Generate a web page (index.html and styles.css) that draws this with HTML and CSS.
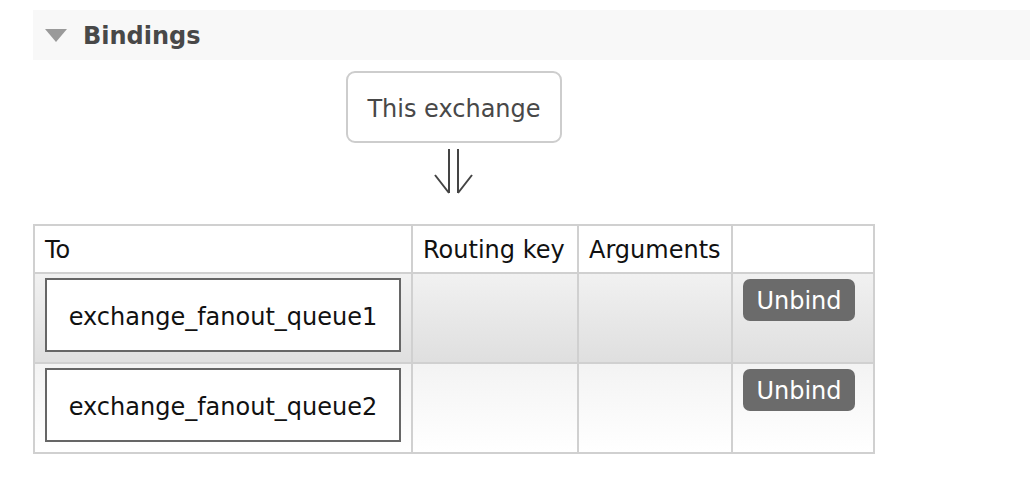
FILE: index.html
```html
<!DOCTYPE html>
<html>
<head>
<meta charset="utf-8">
<link rel="stylesheet" href="styles.css">
</head>
<body>
<div class="page">
  <div class="section-head">
    <span class="toggle"></span>
    <h2 class="section-title">Bindings</h2>
  </div>
  <div class="bindings">
    <div class="source">
      <div class="exchange-box">This exchange</div>
      <svg class="arrow" width="40" height="48" viewBox="0 0 40 48">
        <path d="M15 1 V45 M24 1 V45 M1 27 L15 45 M38 27 L24 45" fill="none" stroke="#444" stroke-width="2"/>
      </svg>
    </div>
    <table class="list">
      <colgroup>
        <col class="c-to"><col class="c-key"><col class="c-args"><col class="c-act">
      </colgroup>
      <thead>
        <tr><th>To</th><th>Routing key</th><th>Arguments</th><th></th></tr>
      </thead>
      <tbody>
        <tr class="alt1">
          <td><div class="queue-box">exchange_fanout_queue1</div></td>
          <td></td>
          <td></td>
          <td><button class="btn">Unbind</button></td>
        </tr>
        <tr class="alt2">
          <td><div class="queue-box">exchange_fanout_queue2</div></td>
          <td></td>
          <td></td>
          <td><button class="btn">Unbind</button></td>
        </tr>
      </tbody>
    </table>
  </div>
</div>
</body>
</html>
```
FILE: styles.css
```css
html, body {
  margin: 0;
  padding: 0;
  background: #fff;
}
body {
  font-family: "DejaVu Sans", Verdana, sans-serif;
  color: #484848;
}
.page {
  padding: 10px 0 0 33px;
}
.section-head {
  display: flex;
  align-items: center;
  height: 50px;
  background: #f8f8f8;
  padding-left: 12px;
}
.toggle {
  width: 0;
  height: 0;
  border-left: 11px solid transparent;
  border-right: 11px solid transparent;
  border-top: 13px solid #9a9a9a;
  margin-right: 16px;
  margin-top: 1px;
}
.section-title {
  margin: 2px 0 0;
  font-size: 24px;
  font-weight: bold;
  color: #484848;
}
.bindings {
  display: inline-flex;
  flex-direction: column;
  align-items: center;
  margin-top: 11px;
}
.source {
  display: flex;
  flex-direction: column;
  align-items: center;
}
.exchange-box {
  border: 2px solid #cdcdcd;
  border-radius: 9px;
  padding: 0 19px;
  height: 68px;
  line-height: 72px;
  font-size: 24px;
  color: #484848;
  overflow: hidden;
}
.arrow {
  display: block;
  margin-top: 5px;
  margin-bottom: 28px;
}
table.list {
  border-collapse: collapse;
  border: 2px solid #d0d0d0;
  font-size: 24px;
  color: #111;
}
.c-to { width: 378px; }
.c-key { width: 166px; }
.c-args { width: 154px; }
.c-act { width: 142px; }
table.list th {
  text-align: left;
  font-weight: normal;
  height: 44px;
  padding: 2px 10px 0;
  border: 2px solid #d0d0d0;
  background: #fff;
  white-space: nowrap;
}
table.list td {
  border: 2px solid #d0d0d0;
  padding: 4px 10px 10px;
  vertical-align: top;
}
tr.alt1 td {
  background: linear-gradient(to bottom, #f1f1f1, #dfdfdf);
}
tr.alt2 td {
  background: linear-gradient(to bottom, #f3f3f3, #ffffff);
}
.queue-box {
  border: 2px solid #666;
  background: #fff;
  height: 70px;
  line-height: 74px;
  text-align: center;
  color: #111;
  white-space: nowrap;
  overflow: hidden;
}
.btn {
  font-family: "DejaVu Sans", Verdana, sans-serif;
  font-size: 24px;
  color: #fff;
  background: #6b6b6b;
  border: none;
  border-radius: 7px;
  width: 112px;
  height: 42px;
  padding: 2px 0 0;
  margin-top: 1px;
}
```
